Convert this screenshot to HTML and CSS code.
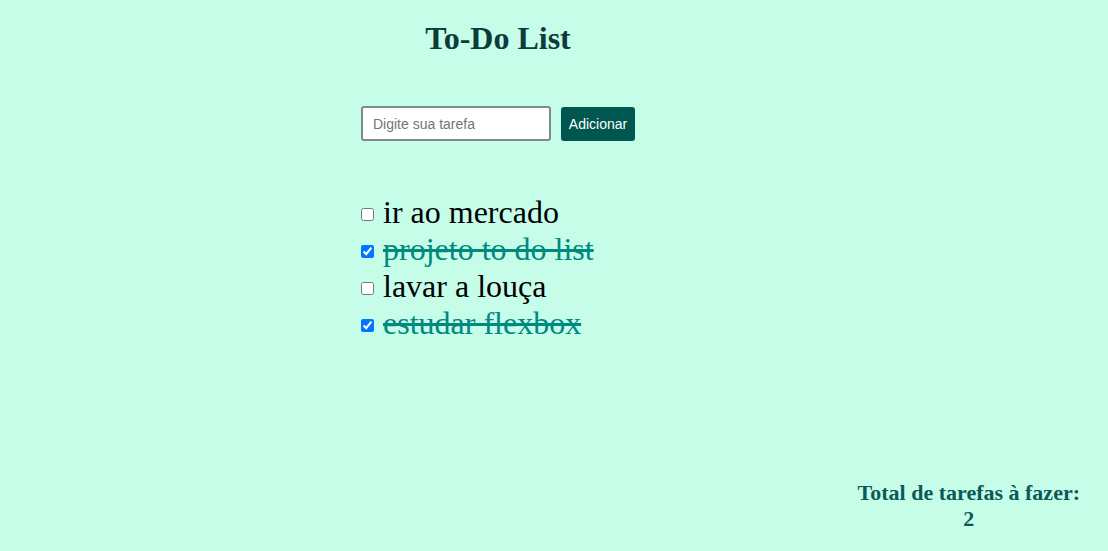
FILE: index.html
```html
<!DOCTYPE html>
<html lang="pt-BR">
<head>
<meta charset="utf-8">
<title>To-Do List</title>
<link rel="stylesheet" href="styles.css">
</head>
<body>
<main class="app">
  <h1 class="title">To-Do List</h1>
  <form class="add-form">
    <input class="task-input" type="text" placeholder="Digite sua tarefa">
    <button class="add-btn" type="button">Adicionar</button>
  </form>
  <ul class="task-list">
    <li class="task"><input class="task-check" type="checkbox"> <span class="task-text">ir ao mercado</span></li>
    <li class="task done"><input class="task-check" type="checkbox" checked> <span class="task-text">projeto to do list</span></li>
    <li class="task"><input class="task-check" type="checkbox"> <span class="task-text">lavar a louça</span></li>
    <li class="task done"><input class="task-check" type="checkbox" checked> <span class="task-text">estudar flexbox</span></li>
  </ul>
</main>
<footer class="total">Total de tarefas à fazer:<br>2</footer>
</body>
</html>
```
FILE: styles.css
```css
html, body {
  background: #c5fde9;
}
body {
  margin: 8px;
  min-height: calc(100vh - 16px);
  display: flex;
  flex-direction: column;
  font-family: "Liberation Serif", "Times New Roman", serif;
}
.app {
  width: 274px;
  margin-left: 353px;
}
.title {
  margin: 12px 0 0;
  font-size: 32px;
  line-height: 37px;
  text-align: center;
  color: #0d3b3c;
}
.add-form {
  display: flex;
  gap: 10px;
  margin-top: 49px;
  align-items: center;
}
.task-input {
  box-sizing: border-box;
  width: 190px;
  height: 35px;
  border: 2px solid #7f8c8d;
  border-radius: 3px;
  padding: 0 10px;
  font-family: "Liberation Sans", Arial, sans-serif;
  font-size: 14px;
  background: #fff;
}
.task-input::placeholder {
  color: #757575;
}
.add-btn {
  box-sizing: border-box;
  width: 74px;
  height: 34px;
  border: none;
  border-radius: 3px;
  background: #00574f;
  color: #fff;
  font-family: "Liberation Sans", Arial, sans-serif;
  font-size: 14px;
  padding: 0;
}
.task-list {
  list-style: none;
  margin: 53px 0 0;
  padding: 0;
}
.task {
  font-size: 32px;
  line-height: 37px;
  color: #000;
  white-space: nowrap;
}
.task-check {
  margin: 0 1px 0 0;
  width: 13px;
  height: 13px;
  vertical-align: middle;
  position: relative;
  top: -1px;
}
.task.done .task-text {
  color: #00897f;
  text-decoration: line-through;
}
.total {
  margin-top: auto;
  align-self: flex-end;
  margin-right: 20px;
  margin-bottom: 11px;
  font-size: 22px;
  line-height: 26px;
  font-weight: bold;
  text-align: center;
  color: #0b5a55;
}
```
